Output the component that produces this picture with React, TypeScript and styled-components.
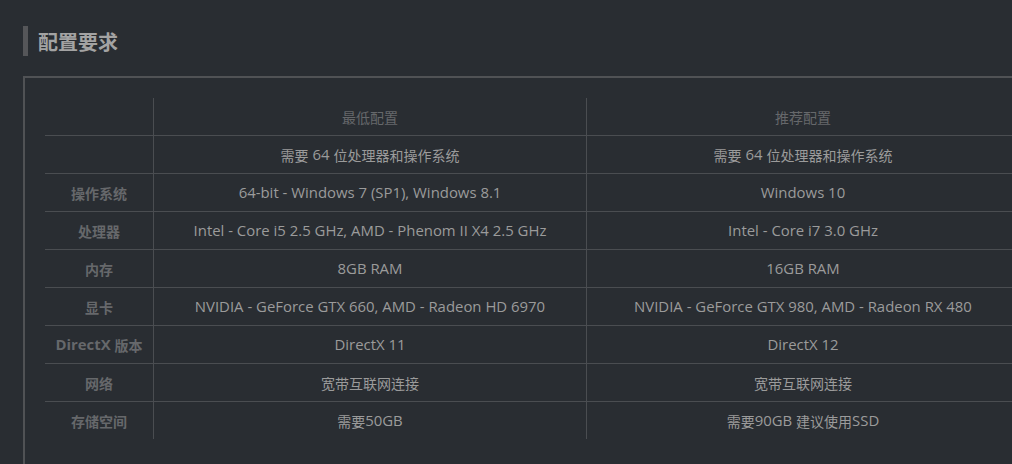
import React from "react";
import styled, { createGlobalStyle } from "styled-components";

const Global = createGlobalStyle`
  html, body { margin: 0; padding: 0; background: #292d32; overflow: hidden; }
  body { font-family: "Open Sans", "Noto Sans CJK SC", sans-serif; }
`;

const Page = styled.div`
  width: 1012px;
  height: 464px;
  padding: 26px 0 0 23px;
  box-sizing: border-box;
  background: #292d32;
  overflow: hidden;
`;

const Heading = styled.h2`
  margin: 0;
  display: flex;
  align-items: center;
  gap: 10px;
  height: 30px;
  font-size: 20px;
  font-weight: 700;
  color: #a3a3a3;
  font-family: "Noto Sans CJK SC", sans-serif;
  &::before {
    content: "";
    width: 5px;
    height: 30px;
    background: #555659;
  }
`;

const Box = styled.div`
  margin-top: 20px;
  width: 1060px;
  border-top: 2px solid #505255;
  border-left: 2px solid #505255;
  padding: 20px 0 0 20px;
  height: 400px;
  box-sizing: border-box;
`;

const Table = styled.div`
  display: grid;
  grid-template-columns: 108px 433px 433px;
  width: 974px;
`;

const Cell = styled.div<{ $first?: boolean; $top?: boolean; $kind: "head" | "label" | "value" }>`
  height: 37px;
  display: flex;
  align-items: center;
  justify-content: center;
  border-left: ${(p) => (p.$first ? "none" : "1px solid #4a4d51")};
  border-top: ${(p) => (p.$top ? "none" : "1px solid #4a4d51")};
  font-size: 14px;
  white-space: pre;
  color: ${(p) => (p.$kind === "value" ? "#9b9b9b" : "#66686b")};
  font-weight: ${(p) => (p.$kind === "label" ? 700 : 400)};
`;

const Latin = styled.span`
  font-size: 1.065em;
  line-height: 1;
`;

function Mixed({ text }: { text: string }) {
  const parts = text.split(/([\x20-\x7E]+)/).filter((s) => s.length > 0);
  return (
    <>
      {parts.map((p, i) =>
        /^[\x20-\x7E]+$/.test(p) && /[A-Za-z0-9]/.test(p) ? <Latin key={i}>{p}</Latin> : <React.Fragment key={i}>{p}</React.Fragment>
      )}
    </>
  );
}

const rows: [string, string, string][] = [
  ["", "需要 64 位处理器和操作系统", "需要 64 位处理器和操作系统"],
  ["操作系统", "64-bit - Windows 7 (SP1), Windows 8.1", "Windows 10"],
  ["处理器", "Intel - Core i5 2.5 GHz, AMD - Phenom II X4 2.5 GHz", "Intel - Core i7 3.0 GHz"],
  ["内存", "8GB RAM", "16GB RAM"],
  ["显卡", "NVIDIA - GeForce GTX 660, AMD - Radeon HD 6970", "NVIDIA - GeForce GTX 980, AMD - Radeon RX 480"],
  ["DirectX 版本", "DirectX 11", "DirectX 12"],
  ["网络", "宽带互联网连接", "宽带互联网连接"],
  ["存储空间", "需要50GB", "需要90GB 建议使用SSD"],
];

export default function App() {
  return (
    <Page>
      <Global />
      <Heading>配置要求</Heading>
      <Box>
        <Table>
          <Cell $first $top $kind="head"></Cell>
          <Cell $top $kind="head">最低配置</Cell>
          <Cell $top $kind="head">推荐配置</Cell>
          {rows.map((r, i) => (
            <React.Fragment key={i}>
              <Cell $first $kind="label"><Mixed text={r[0]} /></Cell>
              <Cell $kind="value"><Mixed text={r[1]} /></Cell>
              <Cell $kind="value"><Mixed text={r[2]} /></Cell>
            </React.Fragment>
          ))}
        </Table>
      </Box>
    </Page>
  );
}
